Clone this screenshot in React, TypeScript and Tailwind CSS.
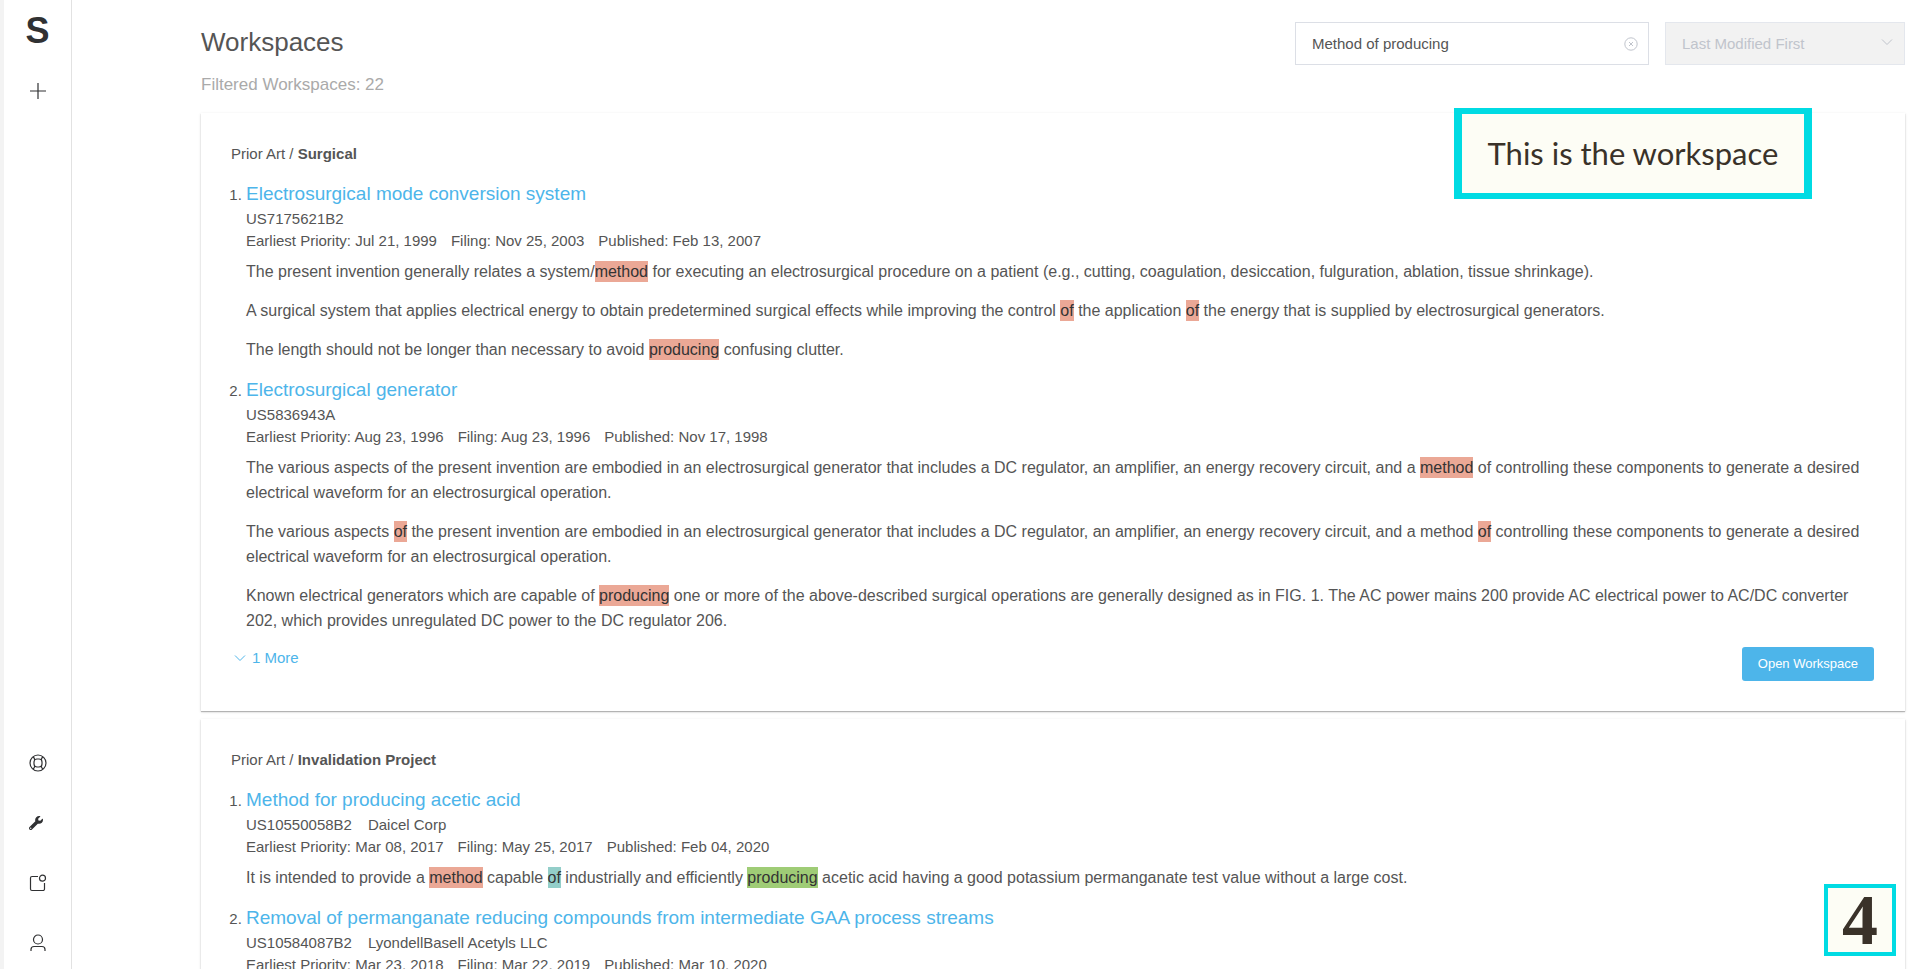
import { Fragment } from "react";
import type { ReactNode } from "react";
import { FaWrench } from "react-icons/fa";

type Patent = {
  title: string;
  number: string;
  assignee?: string;
  priority: string;
  filing: string;
  published: string;
  snippets: string[];
};

type Workspace = {
  folder: string;
  name: string;
  patents: Patent[];
  more?: number;
};

// {r:..}, {t:..} and {g:..} wrap the matched search terms
const workspaces: Workspace[] = [
  {
    folder: "Prior Art",
    name: "Surgical",
    more: 1,
    patents: [
      {
        title: "Electrosurgical mode conversion system",
        number: "US7175621B2",
        priority: "Jul 21, 1999",
        filing: "Nov 25, 2003",
        published: "Feb 13, 2007",
        snippets: [
          "The present invention generally relates a system/{r:method} for executing an electrosurgical procedure on a patient (e.g., cutting, coagulation, desiccation, fulguration, ablation, tissue shrinkage).",
          "A surgical system that applies electrical energy to obtain predetermined surgical effects while improving the control {r:of} the application {r:of} the energy that is supplied by electrosurgical generators.",
          "The length should not be longer than necessary to avoid {r:producing} confusing clutter.",
        ],
      },
      {
        title: "Electrosurgical generator",
        number: "US5836943A",
        priority: "Aug 23, 1996",
        filing: "Aug 23, 1996",
        published: "Nov 17, 1998",
        snippets: [
          "The various aspects of the present invention are embodied in an electrosurgical generator that includes a DC regulator, an amplifier, an energy recovery circuit, and a {r:method} of controlling these components to generate a desired electrical waveform for an electrosurgical operation.",
          "The various aspects {r:of} the present invention are embodied in an electrosurgical generator that includes a DC regulator, an amplifier, an energy recovery circuit, and a method {r:of} controlling these components to generate a desired electrical waveform for an electrosurgical operation.",
          "Known electrical generators which are capable of {r:producing} one or more of the above-described surgical operations are generally designed as in FIG. 1. The AC power mains 200 provide AC electrical power to AC/DC converter 202, which provides unregulated DC power to the DC regulator 206.",
        ],
      },
    ],
  },
  {
    folder: "Prior Art",
    name: "Invalidation Project",
    patents: [
      {
        title: "Method for producing acetic acid",
        number: "US10550058B2",
        assignee: "Daicel Corp",
        priority: "Mar 08, 2017",
        filing: "May 25, 2017",
        published: "Feb 04, 2020",
        snippets: [
          "It is intended to provide a {r:method} capable {t:of} industrially and efficiently {g:producing} acetic acid having a good potassium permanganate test value without a large cost.",
        ],
      },
      {
        title: "Removal of permanganate reducing compounds from intermediate GAA process streams",
        number: "US10584087B2",
        assignee: "LyondellBasell Acetyls LLC",
        priority: "Mar 23, 2018",
        filing: "Mar 22, 2019",
        published: "Mar 10, 2020",
        snippets: [],
      },
    ],
  },
];

const markColors: Record<string, string> = {
  r: "bg-[#eba896]",
  t: "bg-[#93cec9]",
  g: "bg-[#9fcc76]",
};

function Snippet({ text }: { text: string }) {
  return (
    <p className="mb-[14px] text-base leading-[25px]">
      {text.split(/(\{\w:[^}]+\})/).map((part, i) => {
        const match = part.match(/^\{(\w):(.+)\}$/);
        if (!match) return <Fragment key={i}>{part}</Fragment>;
        return (
          <mark key={i} className={`py-[2px] text-[#333] ${markColors[match[1]]}`}>
            {match[2]}
          </mark>
        );
      })}
    </p>
  );
}

function PatentItem({ patent }: { patent: Patent }) {
  return (
    <li>
      <h3 className="text-[19px] leading-[28px]">
        <a href="#" className="text-[#4db5ea]">{patent.title}</a>
      </h3>
      <div className="flex gap-4 leading-[22px]">
        <span>{patent.number}</span>
        {patent.assignee && <span>{patent.assignee}</span>}
      </div>
      <div className="mb-[7px] flex gap-[14px] leading-[22px]">
        <span>Earliest Priority: {patent.priority}</span>
        <span>Filing: {patent.filing}</span>
        <span>Published: {patent.published}</span>
      </div>
      {patent.snippets.map((text) => (
        <Snippet key={text} text={text} />
      ))}
    </li>
  );
}

function WorkspaceCard({ workspace }: { workspace: Workspace }) {
  return (
    <article className="bg-white py-[30px] pr-[31px] pl-[30px] shadow-[0_1px_3px_rgba(0,0,0,0.12),0_1px_1px_rgba(0,0,0,0.24)]">
      <h2 className="mb-[15px] leading-[22px]">
        {workspace.folder} / <strong>{workspace.name}</strong>
      </h2>
      <ol className="list-decimal pl-[15px]">
        {workspace.patents.map((patent) => (
          <PatentItem key={patent.number} patent={patent} />
        ))}
      </ol>
      {workspace.more && (
        <div className="flex items-start justify-between">
          <button className="flex items-center gap-[6px] pl-[3px] leading-[22px] text-[#4db5ea]">
            <Chevron className="size-3" />
            {workspace.more} More
          </button>
          <button className="h-[34px] rounded-[3px] bg-[#4db5ea] px-4 text-[13px] text-white">
            Open Workspace
          </button>
        </div>
      )}
    </article>
  );
}

function Chevron({ className }: { className?: string }) {
  return (
    <svg viewBox="0 0 12 12" fill="none" stroke="currentColor" className={className}>
      <path d="M1 3.5 6 8.5 11 3.5" />
    </svg>
  );
}

function Icon({ children }: { children: ReactNode }) {
  return (
    <svg viewBox="0 0 18 18" fill="none" stroke="currentColor" strokeWidth="1.2" className="size-[18px]">
      {children}
    </svg>
  );
}

function Sidebar() {
  return (
    <nav className="flex w-[68px] shrink-0 flex-col items-center border-r border-[#e2e2e2] text-[#303133]">
      <a href="#" aria-label="Home" className="mt-[11px] text-[36px] leading-10 font-bold">S</a>
      <button aria-label="New workspace" className="mt-[31px]">
        <Icon><path d="M9 1v16M1 9h16" /></Icon>
      </button>
      <div className="mt-auto mb-[17px] flex flex-col items-center gap-[42px]">
        <button aria-label="Help">
          <Icon>
            <circle cx="9" cy="9" r="8" />
            <rect x="5" y="5" width="8" height="8" rx="3" />
            <path d="M4 2.8Q6 4.5 5.5 6.2M14 2.8Q12 4.5 12.5 6.2M4 15.2Q6 13.5 5.5 11.8M14 15.2Q12 13.5 12.5 11.8" />
          </Icon>
        </button>
        <button aria-label="Settings" className="flex size-[18px] items-center">
          <FaWrench size={14} />
        </button>
        <button aria-label="Notifications">
          <Icon>
            <path d="M9 2.5H3A1.5 1.5 0 0 0 1.5 4v11A1.5 1.5 0 0 0 3 16.5h11a1.5 1.5 0 0 0 1.5-1.5V9" />
            <circle cx="13.5" cy="4.2" r="3" />
          </Icon>
        </button>
        <button aria-label="Account">
          <Icon>
            <circle cx="9" cy="5.5" r="4.5" />
            <path d="M2 17v-1.5a3 3 0 0 1 3-3h8a3 3 0 0 1 3 3V17" />
          </Icon>
        </button>
      </div>
    </nav>
  );
}

function Toolbar() {
  return (
    <div className="flex items-start justify-between">
      <div>
        <h1 className="text-[26px] leading-10">Workspaces</h1>
        <p className="mt-[11px] text-[17px] leading-6 text-[#aaa]">Filtered Workspaces: 22</p>
      </div>
      <div className="flex gap-4">
        <div className="relative">
          <input
            type="text"
            aria-label="Search workspaces"
            defaultValue="Method of producing"
            className="h-[43px] w-[354px] border border-[#dcdfe6] bg-white px-4 text-[15px]"
          />
          <button aria-label="Clear search" className="absolute top-[15px] right-[11px] text-[#c0c4cc]">
            <svg viewBox="0 0 14 14" fill="none" stroke="currentColor" className="size-[14px]">
              <circle cx="7" cy="7" r="6.2" />
              <path d="m5 5 4 4M9 5 5 9" />
            </svg>
          </button>
        </div>
        <div className="relative">
          <select
            disabled
            aria-label="Sort order"
            className="h-[43px] w-[240px] appearance-none border border-[#e4e7ed] bg-[#f2f2f2] px-4 pt-0.5 text-[15px] text-[#c0c4cc] opacity-100"
          >
            <option>Last Modified First</option>
          </select>
          <Chevron className="pointer-events-none absolute top-[14px] right-3 size-3 text-[#c0c4cc]" />
        </div>
      </div>
    </div>
  );
}

export default function App() {
  return (
    <div className="relative flex h-screen overflow-hidden border-l-4 border-[#f3f3f3] bg-white font-['Liberation_Sans',Arial,sans-serif] text-[15px] text-[#555]">
      <Sidebar />
      <main className="min-w-0 flex-1 pt-[22px] pr-[15px] pl-[129px]">
        <Toolbar />
        <div className="mt-4 flex flex-col gap-2">
          {workspaces.map((workspace) => (
            <WorkspaceCard key={workspace.name} workspace={workspace} />
          ))}
        </div>
      </main>
      <div className="absolute top-[108px] right-[108px] flex h-[91px] w-[358px] items-center justify-center border-x-8 border-y-6 border-[#00dbe3] bg-[#fdfdf5] font-[Lato,sans-serif] text-[31px] text-[#3a3229]">
        This is the workspace
      </div>
      <div className="absolute right-6 bottom-[13px] flex size-[72px] items-center justify-center border-4 border-[#00dbe3] bg-[#fdfdf5] font-['Liberation_Serif',serif] text-[72px] leading-none font-bold text-[#3a3229]">
        4
      </div>
    </div>
  );
}
